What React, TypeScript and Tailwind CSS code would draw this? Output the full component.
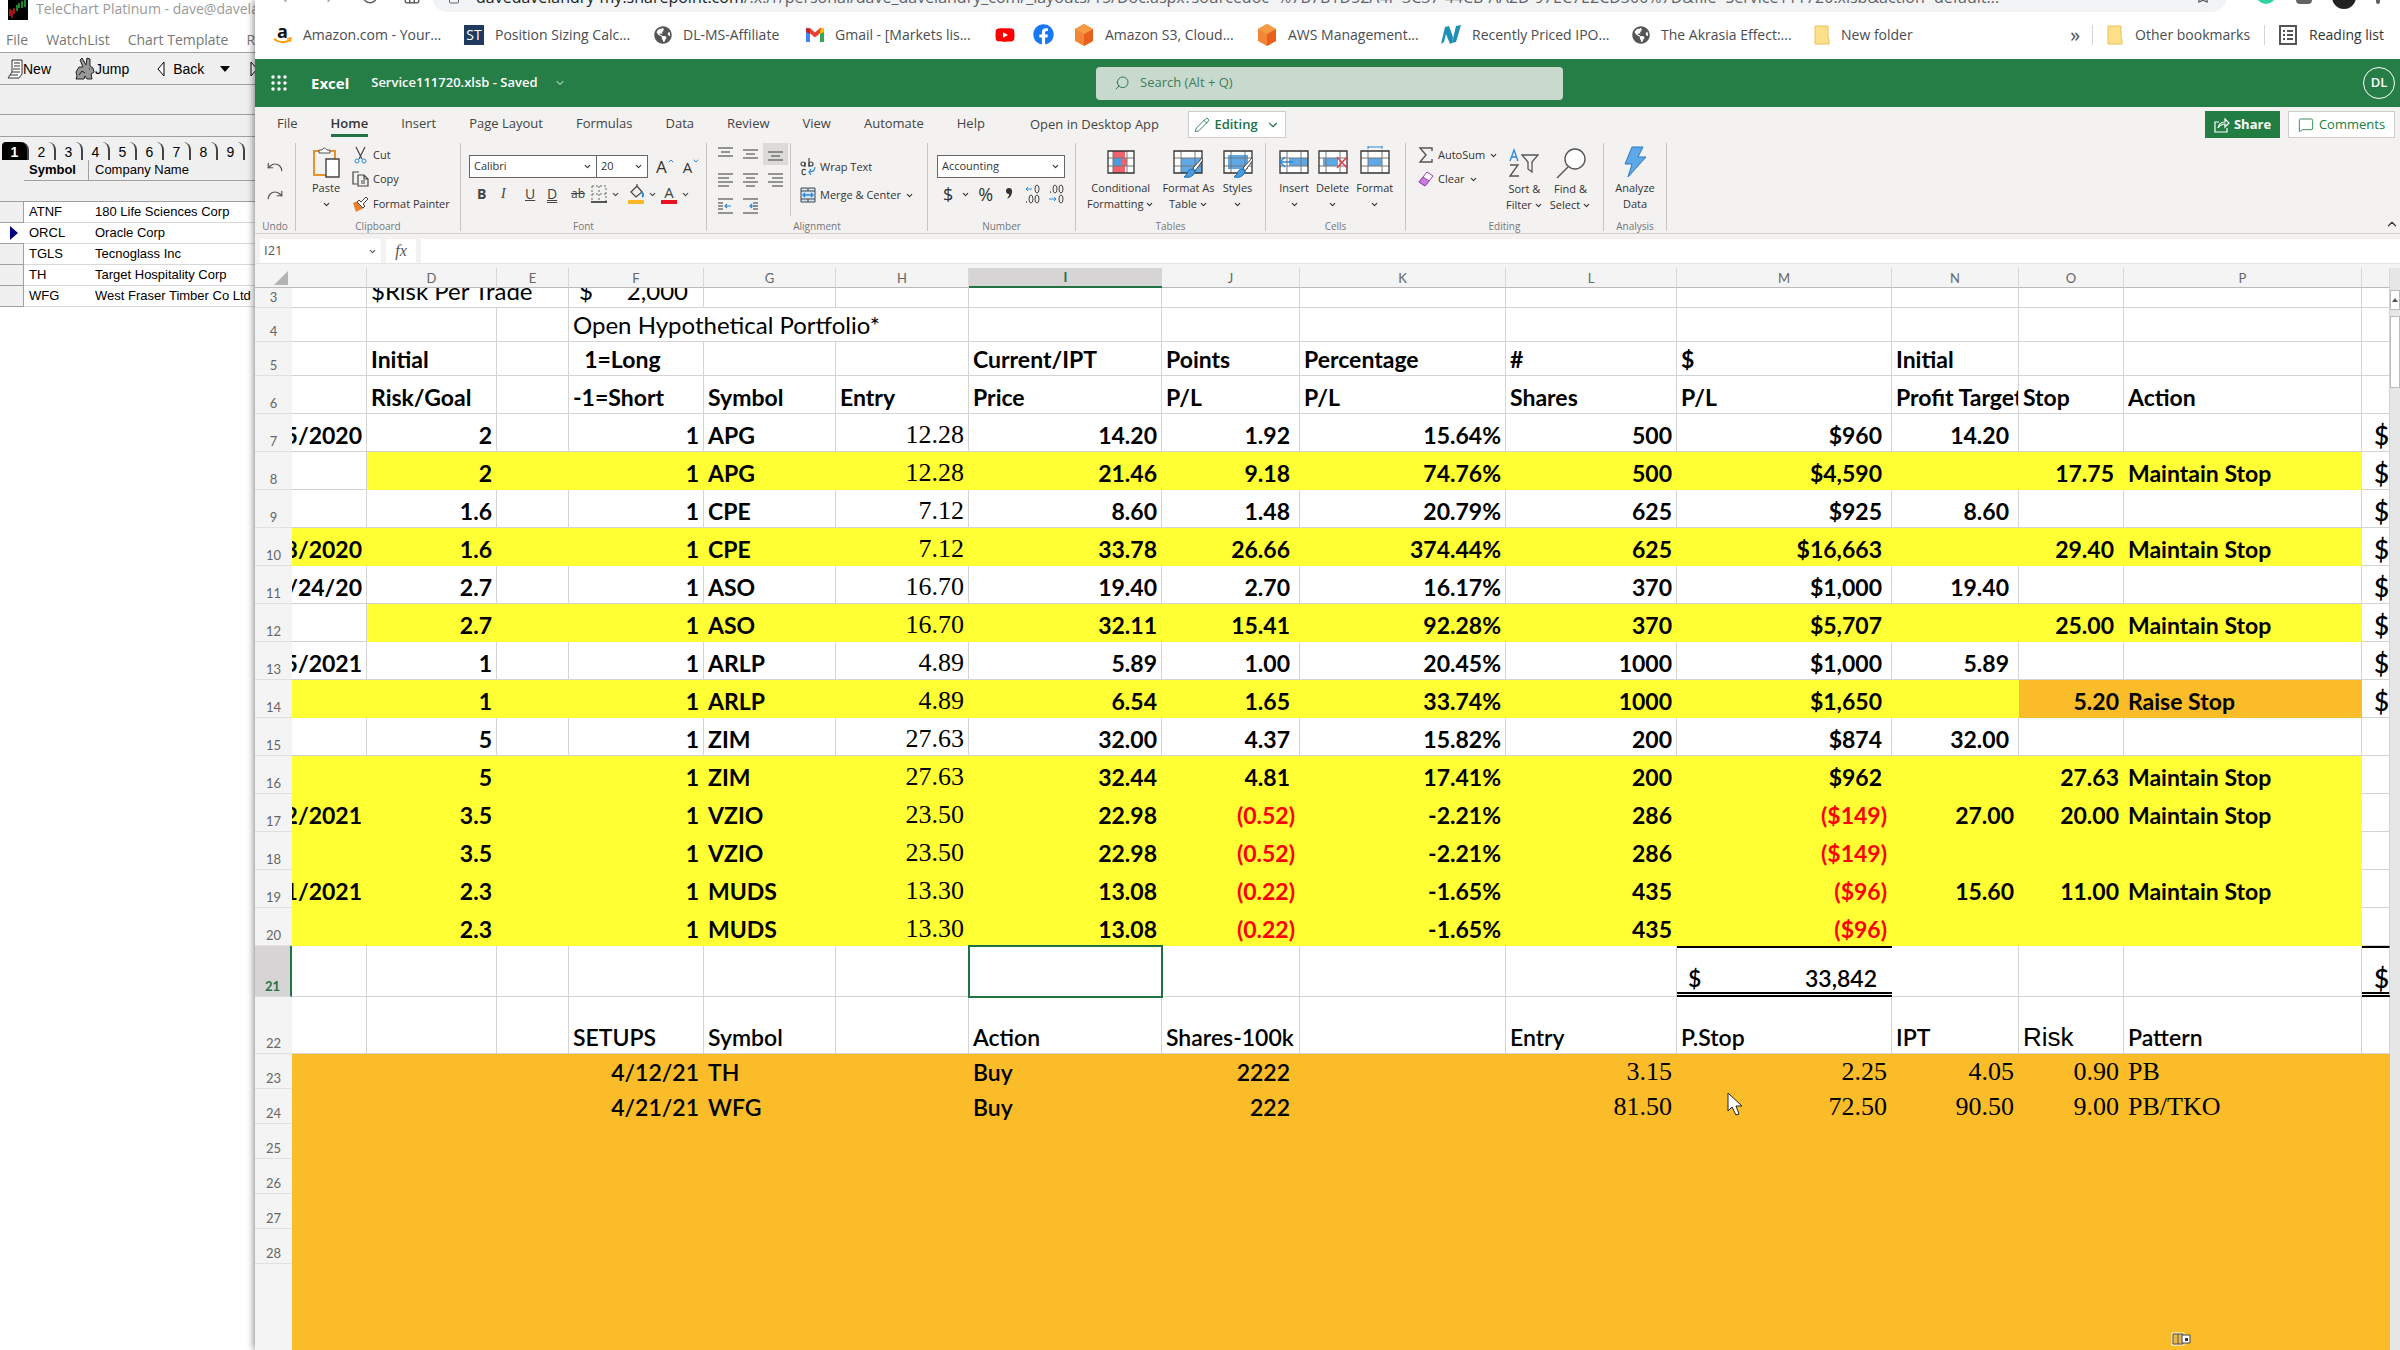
import React from 'react';
import clsx from 'clsx';
import {
  ArrowLeft,
  ArrowRight,
  ChevronDown,
  ChevronUp,
  Home,
  Lock,
  MessageSquare,
  Pencil,
  Redo,
  RotateCw,
  Search,
  Star,
  Undo,
} from 'lucide-react';
import { FaGlobeAmericas, FaYoutube, FaFacebook, FaAmazon } from 'react-icons/fa';

/* ---------- TeleChart window ---------- */

const watchList = [
  { symbol: 'ATNF', name: '180 Life Sciences Corp' },
  { symbol: 'ORCL', name: 'Oracle Corp', current: true },
  { symbol: 'TGLS', name: 'Tecnoglass Inc' },
  { symbol: 'TH', name: 'Target Hospitality Corp' },
  { symbol: 'WFG', name: 'West Fraser Timber Co Ltd' },
];

function TeleChart() {
  return (
    <aside className="w-[255px] shrink-0 overflow-hidden whitespace-nowrap bg-white font-['Liberation_Sans',sans-serif] text-sm text-black">
      <div className="flex h-[22px] items-start pl-2 font-['Open_Sans',sans-serif] text-[#9a9a9a]">
        <svg className="mr-2 h-5 w-5 shrink-0" viewBox="0 0 20 20">
          <rect width="20" height="20" fill="#000" />
          <path d="M2 9v7M4 10v8M6 8v6" stroke="#e02020" strokeWidth="1.4" />
          <path d="M9 5v6M11 3v5M14 1v7M17 0v7" stroke="#20c040" strokeWidth="1.4" />
        </svg>
        <span className="leading-[17px]">TeleChart Platinum - dave@davelandry.com</span>
      </div>
      <nav className="flex h-[30px] items-center gap-[18px] pl-[6px] pt-[6px] font-['Open_Sans',sans-serif] text-sm text-[#777]">
        <button>File</button>
        <button>WatchList</button>
        <button>Chart Template</button>
        <button>Reports</button>
      </nav>
      <div className="flex h-[33px] items-center border-y border-[#a0a0a0] bg-[#f0f0f0] pl-[7px]">
        <button className="flex items-center">
          <svg className="h-5 w-4" viewBox="0 0 16 20" fill="#fff" stroke="#333">
            <path d="M5 1h10v14l-3 4H1l4-6z" />
            <path d="M7 4h6M7 7h6M6 10h7M5 13h8M3 16h8" />
          </svg>
          New
        </button>
        <span className="mx-3 h-6 w-px bg-[#888]" />
        <button className="flex items-center">
          <svg className="h-6 w-5" viewBox="0 0 20 24" fill="#999" stroke="#222">
            <path d="M8 10 5 3l2-2 4 7 1-7 3 1v7l3 2 1 4-3 2 1 5h-5l-2-3-1 3H1l1-3-1-4 3-5z" />
            <path d="m4 18 3-4 3 2M14 12h1" />
          </svg>
          Jump
        </button>
        <span className="mx-3 h-6 w-px bg-[#888]" />
        <button className="flex items-center gap-2">
          <svg className="ml-1 h-4 w-2" viewBox="0 0 8 16" fill="#fff" stroke="#000">
            <path d="M7 1v14L1 8z" />
          </svg>
          Back
          <svg className="ml-2 h-2 w-[10px]" viewBox="0 0 10 8">
            <path d="M0 1h10L5 7z" />
          </svg>
        </button>
        <svg className="ml-5 h-4 w-2 shrink-0" viewBox="0 0 8 16" fill="#fff" stroke="#000">
          <path d="M1 1v14l6-7z" />
        </svg>
      </div>
      <div className="h-[30px] border-b border-[#a0a0a0] bg-[#f0f0f0]" />
      <div className="h-[22px] border-b border-[#a0a0a0] bg-[#f0f0f0]" />
      <div className="flex h-[23px] items-end bg-[#f0f0f0] pl-[2px]">
        {['1', '2', '3', '4', '5', '6', '7', '8', '9'].map((n) => (
          <button
            key={n}
            className={clsx(
              'h-[18px] w-[27px] rounded-tr-lg border-r-2 border-[#444]',
              n === '1' && 'rounded-t bg-black font-bold text-white'
            )}
          >
            {n}
          </button>
        ))}
      </div>
      <table className="w-full table-fixed border-separate border-spacing-0 text-left text-[13px]">
        <colgroup>
          <col className="w-[24px]" />
          <col className="w-[65px]" />
          <col />
        </colgroup>
        <thead>
          <tr className="h-[21px] bg-[#f0f0f0]">
            <th />
            <th className="border-b border-r border-[#a0a0a0] pl-[5px]">Symbol</th>
            <th className="border-b border-[#a0a0a0] pl-[6px] font-normal">Company Name</th>
          </tr>
          <tr className="h-[21px] bg-[#f0f0f0]">
            <th colSpan={3} className="border-b border-[#a0a0a0]" />
          </tr>
        </thead>
        <tbody>
          {watchList.map((row) => (
            <tr key={row.symbol} className="h-[21px] leading-5">
              <td className={clsx('border-b border-[#a0a0a0]', !row.current && 'border-r bg-[#f0f0f0]')}>
                {row.current && (
                  <svg className="ml-[10px] h-[14px] w-2" viewBox="0 0 8 14">
                    <path d="M0 0v14l8-7z" fill="#000080" />
                  </svg>
                )}
              </td>
              <td className="border-b border-[#d8d8d8] pl-[5px]">{row.symbol}</td>
              <td className="border-b border-[#d8d8d8] pl-[6px]">{row.name}</td>
            </tr>
          ))}
        </tbody>
      </table>
    </aside>
  );
}

/* ---------- Browser chrome ---------- */

function AddressBar() {
  return (
    <div className="flex h-3 items-end overflow-hidden text-[#5f6368]">
      <div className="flex w-[177px] shrink-0 items-end gap-6 pl-[22px] [&>svg]:h-[18px] [&>svg]:w-[18px] [&>svg]:shrink-0 [&>svg]:-translate-y-[7px]">
        <ArrowLeft className="text-gray-400" />
        <ArrowRight className="text-gray-400" />
        <RotateCw />
        <Home />
      </div>
      <div className="flex h-8 min-w-0 flex-1 items-end rounded-full bg-[#f1f3f4] px-4">
        <Lock className="h-3 w-3 shrink-0 -translate-y-2" />
        <span className="ml-4 flex-1 overflow-hidden whitespace-nowrap pb-[5px] text-base leading-5">
          <span className="text-[#202124]">davedavelandry-my.sharepoint.com</span>
          /:x:/r/personal/dave_davelandry_com/_layouts/15/Doc.aspx?sourcedoc=%7B7B1D52A4F-3C37-44CB-AA2D-97EC7E2CD300%7D&amp;file=Service111720.xlsb&amp;action=default...
        </span>
        <Star className="h-4 w-4 shrink-0 -translate-y-2" />
      </div>
      <div className="flex w-[173px] shrink-0 items-end justify-end gap-5 pr-5">
        <span className="h-5 w-5 -translate-y-2 rounded-full bg-[#2bd4a0]" />
        <span className="h-4 w-4 -translate-y-2 rounded bg-[#5f6368]" />
        <span className="h-6 w-6 -translate-y-[3px] rounded-full bg-[#222]" />
        <span className="h-4 w-1 -translate-y-2 rounded bg-[#5f6368]" />
      </div>
    </div>
  );
}

function Amazon() {
  return (
    <svg className="h-5 w-[19px]" viewBox="0 0 19 20">
      <text x="4" y="13" fontSize="18" fontWeight="bold" fill="#111">a</text>
      <path d="M1 14q8 6 16 1" fill="none" stroke="#f90" strokeWidth="2" />
      <path d="m14 14 4-1-1 4" fill="none" stroke="#f90" strokeWidth="1.4" />
    </svg>
  );
}

function Cube() {
  return (
    <svg className="h-[22px] w-5" viewBox="0 0 20 22">
      <path d="m10 0 9 5v12l-9 5-9-5V5z" fill="#f58536" />
      <path d="m10 10 9-5v12l-9 5z" fill="#e8601c" />
      <path d="m10 0 9 5-9 5-9-5z" fill="#f79a45" />
    </svg>
  );
}

function Folder() {
  return (
    <svg className="h-5 w-4" viewBox="0 0 16 20">
      <path d="M1 1h13v12l1 1v5H1z" fill="#ffe08a" stroke="#e6c25a" />
    </svg>
  );
}

function Gmail() {
  return (
    <svg className="h-[15px] w-[18px]" viewBox="0 0 18 15" fill="none">
      <path d="M2 3v12" stroke="#4285f4" strokeWidth="4" />
      <path d="M16 3v12" stroke="#34a853" strokeWidth="4" />
      <path d="m2 2 7 6 7-6" stroke="#ea4335" strokeWidth="4" strokeLinejoin="round" />
      <path d="M0 2v3l4 2V3Q1-1 0 2" fill="#c5221f" />
      <path d="M18 2v3l-4 2V3q3-4 4-1" fill="#fbbc04" />
    </svg>
  );
}

function Nasdaq() {
  return (
    <svg className="h-5 w-5" viewBox="0 0 20 20">
      <path d="m4 2 4-1 4 11-1 6-2 1L5 9l-2 8-3 2zM15 1l5-1-5 17-4 1z" fill="#1f8fb5" />
    </svg>
  );
}

const bookmarks = [
  { label: 'Amazon.com - Your...', width: 'w-[191px]', icon: <Amazon /> },
  {
    label: 'Position Sizing Calc...',
    width: 'w-[190px]',
    icon: (
      <span className="flex h-5 w-5 items-center justify-center bg-[#1f3a5f] text-sm leading-5 text-white">ST</span>
    ),
  },
  {
    label: 'DL-MS-Affiliate',
    width: 'w-[152px]',
    icon: <FaGlobeAmericas className="h-[18px] w-[18px] text-[#555]" />,
  },
  { label: 'Gmail - [Markets lis...', width: 'w-[189px]', icon: <Gmail /> },
  { label: '', name: 'YouTube', width: 'w-[38px]', icon: <FaYoutube className="h-5 w-5 text-[#f00]" /> },
  { label: '', name: 'Facebook', width: 'w-[41px]', icon: <FaFacebook className="h-[21px] w-[21px] text-[#1877f2]" /> },
  { label: 'Amazon S3, Cloud...', width: 'w-[183px]', icon: <Cube /> },
  { label: 'AWS Management...', width: 'w-[184px]', icon: <Cube /> },
  { label: 'Recently Priced IPO...', width: 'w-[191px]', icon: <Nasdaq /> },
  {
    label: 'The Akrasia Effect:...',
    width: 'w-[182px]',
    icon: <FaGlobeAmericas className="h-[18px] w-[18px] text-[#555]" />,
  },
  { label: 'New folder', width: 'w-[110px]', icon: <Folder /> },
];

function Bookmarks() {
  return (
    <nav className="flex h-[47px] items-center whitespace-nowrap bg-white pb-[2px] pl-[18px] pr-4 text-sm text-[#4a4d52]">
      {bookmarks.map((b) => (
        <a key={b.label || b.name} href="#" aria-label={b.name} className={clsx('flex shrink-0 items-center gap-[11px]', b.width)}>
          {b.icon}
          {b.label}
        </a>
      ))}
      <button className="ml-auto pr-3 text-xl leading-5">»</button>
      <a href="#" className="flex items-center gap-3 border-l border-gray-300 px-[14px]">
        <Folder />
        Other bookmarks
      </a>
      <a href="#" className="flex items-center gap-3 border-l border-gray-300 pl-[14px] text-[#333]">
        <svg className="h-5 w-[18px]" viewBox="0 0 18 20" fill="none" stroke="#555" strokeWidth="2">
          <path d="M1 1h16v18H1zM4 6h2M8 6h6M4 10h2M8 10h6M4 14h2M8 14h6" />
        </svg>
        Reading list
      </a>
    </nav>
  );
}

/* ---------- Excel header ---------- */

function TitleBar() {
  return (
    <header className="flex h-12 items-center bg-[#257e46] pl-4 pr-[5px] text-white">
      <button aria-label="App launcher">
        <svg className="h-[17px] w-[17px]" viewBox="0 0 17 17" fill="#fff">
          {[2, 8, 14].map((x) => [2, 8, 14].map((y) => <circle key={`${x}-${y}`} cx={x} cy={y} r="1.7" />))}
        </svg>
      </button>
      <span className="ml-[23px] text-[15px] font-bold">Excel</span>
      <button className="ml-[22px] flex items-center text-[13px] font-semibold">
        Service111720.xlsb - Saved
        <ChevronDown className="ml-4 h-3 w-3" />
      </button>
      <label className="ml-auto mr-[800px] flex h-[33px] w-[467px] items-center rounded-sm bg-[#c8d9ce] text-[#2e7a4c]">
        <Search className="ml-[18px] h-4 w-4 -scale-x-100" strokeWidth={1.5} />
        <input
          className="ml-[10px] flex-1 bg-transparent text-[13px] outline-none placeholder:text-[#3d7d58]"
          placeholder="Search (Alt + Q)"
        />
      </label>
      <button className="h-8 w-8 shrink-0 rounded-full border border-white text-[13px] font-semibold">DL</button>
    </header>
  );
}

const tabs = ['File', 'Home', 'Insert', 'Page Layout', 'Formulas', 'Data', 'Review', 'View', 'Automate', 'Help'];

function ShareIcon() {
  return (
    <svg className="h-4 w-4" viewBox="0 0 16 16" fill="none" stroke="currentColor" strokeWidth="1.2">
      <path d="M5 5H1v10h12v-4" />
      <path d="M4 11q1-6 7-6V2l4 4-4 4V7Q7 7 4 11z" />
    </svg>
  );
}

function TabBar() {
  return (
    <div className="flex h-[36px] items-start whitespace-nowrap pl-[22px] pr-[5px] pt-1 text-[13px] text-[#444]">
      <nav className="flex w-[708px] shrink-0 justify-between pt-[2px]">
        {tabs.map((tab) => (
          <button
            key={tab}
            className={clsx(
              'flex h-6 items-start leading-5',
              tab === 'Home' && 'border-b-[3px] border-[#217346] font-semibold text-[#333]'
            )}
          >
            {tab}
          </button>
        ))}
      </nav>
      <button className="ml-[45px] w-[134px] text-left leading-[27px]">Open in Desktop App</button>
      <button className="ml-[24px] flex h-[27px] w-[98px] shrink-0 items-center justify-center gap-1 border border-[#ccc] bg-white font-semibold text-[#217346]">
        <Pencil className="h-4 w-4" strokeWidth={1.3} />
        Editing
        <ChevronDown className="ml-1 h-[14px] w-[14px]" />
      </button>
      <button className="ml-auto flex h-[27px] w-[75px] items-center justify-center gap-1 bg-[#217d42] font-bold text-white">
        <ShareIcon />
        Share
      </button>
      <button className="ml-2 flex h-[27px] w-[107px] items-center justify-center gap-[5px] border border-[#ccc] bg-white text-[#217d42]">
        <MessageSquare className="h-4 w-4" strokeWidth={1.3} />
        Comments
      </button>
    </div>
  );
}

/* ---------- Ribbon ---------- */

function Caret() {
  return <ChevronDown className="h-[9px] w-[9px] shrink-0" strokeWidth={3} />;
}

function Group({ label, width, children }: { label: string; width: string; children: React.ReactNode }) {
  return (
    <section className={clsx('flex h-[88px] shrink-0 flex-col border-r border-[#c8c6c4]', width)}>
      <div className="flex flex-1 items-start">{children}</div>
      <h2 className="text-center text-[10px] leading-[10px] text-[#767676]">{label}</h2>
    </section>
  );
}

function BigButton({ icon, lines, caret = 'below' }: { icon: React.ReactNode; lines: string[]; caret?: string }) {
  return (
    <button className="flex flex-col items-center leading-4">
      <span className="flex h-9 items-center">{icon}</span>
      <span>{lines[0]}</span>
      <span className="flex h-4 items-center gap-[2px]">
        {lines[1]}
        {caret !== 'none' && <Caret />}
      </span>
    </button>
  );
}

function PasteIcon() {
  return (
    <svg className="h-8 w-[28px]" viewBox="0 0 28 32" fill="none">
      <path d="M7 5H2v24h12M18 5h5v8" stroke="#e8912d" strokeWidth="2" />
      <path d="M7 7V4h3q2-4 5 0h3v3z" fill="#fff" stroke="#555" />
      <path d="M14 13h13v18H14z" fill="#fff" stroke="#444" strokeWidth="1.4" />
    </svg>
  );
}

function CutIcon() {
  return (
    <svg className="h-[18px] w-[17px]" viewBox="0 0 17 18" fill="none">
      <path d="m4 1 6 12M13 1 7 13" stroke="#444" strokeWidth="1.2" />
      <circle cx="5" cy="15" r="2" stroke="#2b88d8" />
      <circle cx="12" cy="15" r="2" stroke="#2b88d8" />
    </svg>
  );
}

function CopyIcon() {
  return (
    <svg className="h-4 w-[17px]" viewBox="0 0 17 16" fill="none" stroke="#444" strokeWidth="1.2">
      <path d="M5 13H1V1h6" />
      <path d="M6 4h6l4 4v7H6zM12 4v4h4M9 10h4M9 12h4" />
    </svg>
  );
}

function PainterIcon() {
  return (
    <svg className="h-[17px] w-[17px]" viewBox="0 0 17 17">
      <path d="m1 7 3 9 8-4-6-7z" fill="#e8842d" />
      <path d="m5 6 6 6 2-2-2-2 5-5-2-2-5 5-2-2z" fill="#fff" stroke="#444" />
    </svg>
  );
}

function Lines({ rows, indent }: { rows: number[][]; indent?: boolean }) {
  return (
    <svg className="h-4 w-4" viewBox="0 0 16 16" strokeWidth="1.2">
      {rows.map(([x, y, w]) => (
        <path key={y} d={`M${x} ${y}h${w}`} stroke="#555" />
      ))}
      {indent && <path d="M13 8H7m2-2L7 8l2 2" stroke="#2b88d8" fill="none" />}
    </svg>
  );
}

const alignIcons = [
  { name: 'Top align', rows: [[0, 2, 15], [3, 6, 9], [0, 10, 15]] },
  { name: 'Middle align', rows: [[0, 4, 15], [3, 8, 9], [0, 12, 15]] },
  { name: 'Bottom align', rows: [[0, 6, 15], [3, 10, 9], [0, 14, 15]], active: true },
  { name: 'Align left', rows: [[0, 2, 15], [0, 6, 11], [0, 10, 15], [0, 14, 11]] },
  { name: 'Center', rows: [[0, 2, 15], [3, 6, 9], [0, 10, 15], [3, 14, 9]] },
  { name: 'Align right', rows: [[0, 2, 15], [4, 6, 11], [0, 10, 15], [4, 14, 11]] },
  { name: 'Decrease indent', rows: [[0, 1, 15], [0, 5, 5], [0, 8, 5], [0, 11, 5], [0, 15, 15]], indent: true },
  { name: 'Increase indent', rows: [[0, 1, 15], [10, 5, 5], [10, 8, 5], [10, 11, 5], [0, 15, 15]], indent: true },
];

// Small worksheet drawing shared by the table and cell commands
function Sheet({ children, cells }: { children?: React.ReactNode; cells: string }) {
  return (
    <svg className="h-8 w-[30px]" viewBox="0 0 30 32" fill="none">
      <path d="M1 5h28v22H1z" fill="#fff" />
      <path d={cells} fill="#5fa8e6" />
      <path d="M1 12h28M1 20h28M8 5v22M22 5v22" stroke="#777" />
      <path d="M1 5h28v22H1z" stroke="#333" strokeWidth="1.3" />
      {children}
    </svg>
  );
}

const brush = (
  <>
    <path d="m29 12-9 10 2 3 8-11z" fill="#fff" stroke="#444" />
    <path d="M20 23q-5 0-6 5l-3 3q8 2 11-5z" fill="#4a9be0" stroke="#1f6fb5" />
  </>
);

function Picker({ label, value, width }: { label: string; value: string; width: string }) {
  return (
    <span className={clsx('flex h-[23px] items-center border border-[#666] bg-white pr-1', width)}>
      <select aria-label={label} className="h-full min-w-0 flex-1 appearance-none bg-transparent pl-1 text-[11px] outline-none">
        <option>{value}</option>
      </select>
      <Caret />
    </span>
  );
}

function Ribbon() {
  return (
    <div className="flex items-start border-b border-[#d2d0ce] pb-[2px] text-[11px] text-[#333]">
      <Group label="Undo" width="w-[41px]">
        <div className="flex w-full flex-col items-center gap-[10px] pt-[15px] text-[#555]">
          <button aria-label="Undo"><Undo className="h-[18px] w-[18px]" strokeWidth={1.6} /></button>
          <button aria-label="Redo"><Redo className="h-[18px] w-[18px]" strokeWidth={1.6} /></button>
        </div>
      </Group>
      <Group label="Clipboard" width="w-[165px]">
        <div className="flex pl-4 pt-[1px]">
          <BigButton icon={<PasteIcon />} lines={['Paste']} />
          <div className="ml-3 flex flex-col gap-1 pt-px">
            <button className="flex h-5 items-center gap-1"><CutIcon />Cut</button>
            <button className="flex h-5 items-center gap-1"><CopyIcon />Copy</button>
            <button className="flex h-[22px] items-center gap-1"><PainterIcon />Format Painter</button>
          </div>
        </div>
      </Group>
      <Group label="Font" width="w-[246px]">
        <div className="flex flex-col pl-2 pt-3">
          <div className="flex items-center">
            <Picker label="Font" value="Calibri" width="w-[128px]" />
            <Picker label="Font size" value="20" width="-ml-px w-[52px]" />
            <button className="ml-2 flex text-[17px] leading-5">A<ChevronUp className="h-2 w-2 text-[#2b88d8]" strokeWidth={3} /></button>
            <button className="ml-2 flex text-[15px] leading-5">A<ChevronDown className="h-2 w-2 text-[#2b88d8]" strokeWidth={3} /></button>
          </div>
          <div className="mt-[6px] flex h-5 items-center pl-2 text-sm text-[#444]">
            <button className="w-6 text-left font-bold">B</button>
            <button className="w-6 text-left font-['Liberation_Serif',serif] italic">I</button>
            <button className="w-[22px] text-left underline">U</button>
            <button className="w-6 text-left underline decoration-double">D</button>
            <button className="w-5 text-left text-xs line-through">ab</button>
            <svg className="h-[18px] w-[16px]" viewBox="0 0 16 18" fill="none" stroke="#666">
              <path d="M1 1h14v16M1 1v16M8 1v16M1 9h14" strokeDasharray="2 2" />
              <path d="M0 17h16" stroke="#222" strokeWidth="1.5" />
            </svg>
            <span className="mx-1"><Caret /></span>
            <svg className="ml-1 h-5 w-4" viewBox="0 0 16 20" fill="none">
              <path d="m3 8 6-6 5 6-6 5zM9 2V0" stroke="#444" strokeWidth="1.2" />
              <path d="M14 8q2 4 0 5" stroke="#2b88d8" strokeWidth="2" />
              <path d="M0 16h16v4H0z" fill="#fcb728" />
            </svg>
            <span className="mx-1"><Caret /></span>
            <button className="w-4 border-b-4 border-[#e81123] text-[15px] leading-4">A</button>
            <span className="mx-1"><Caret /></span>
          </div>
        </div>
      </Group>
      <Group label="Alignment" width="w-[221px]">
        <div className="flex">
          <div className="grid h-[73px] w-[84px] grid-cols-[25px_25px_25px] content-start gap-y-1 border-r border-[#c8c6c4] pl-[6px]">
            {alignIcons.map((icon) => (
              <button
                key={icon.name}
                aria-label={icon.name}
                className={clsx('flex h-[22px] items-center justify-center', icon.active && 'bg-[#dddbda]')}
              >
                <Lines rows={icon.rows} indent={icon.indent} />
              </button>
            ))}
          </div>
          <div className="flex flex-col gap-2 pl-[9px] pt-[14px]">
            <button className="flex h-5 items-center gap-1">
              <svg className="h-[18px] w-4" viewBox="0 0 16 18" fill="none" stroke="#444" strokeWidth="1.2">
                <circle cx="3" cy="6" r="2" />
                <path d="M5 4v5M9 0v9" />
                <circle cx="11" cy="6" r="2" />
                <path d="M6 12q-4-2-4 2t4 2" />
                <path d="M15 9q0 5-6 5m2-3-2 3 2 3" stroke="#2b88d8" />
              </svg>
              Wrap Text
            </button>
            <button className="flex h-5 items-center gap-1">
              <svg className="h-4 w-4" viewBox="0 0 16 16" fill="none">
                <path d="M1 1h14v14H1z" fill="#cfe4f7" stroke="#444" />
                <path d="M1 4h14M1 12h14M8 1v3M8 12v3" stroke="#444" />
                <path d="M3 8h10M5 6 3 8l2 2M11 6l2 2-2 2" stroke="#2b88d8" strokeWidth="1.3" />
              </svg>
              Merge &amp; Center
              <Caret />
            </button>
          </div>
        </div>
      </Group>
      <Group label="Number" width="w-[148px]">
        <div className="flex flex-col pl-[9px] pt-3">
          <Picker label="Number format" value="Accounting" width="w-[128px]" />
          <div className="mt-[6px] flex h-5 items-center gap-2 pl-[6px]">
            <button className="text-lg">$</button>
            <Caret />
            <button className="text-lg">%</button>
            <svg className="mx-1 h-4 w-2" viewBox="0 0 8 16">
              <circle cx="4" cy="5" r="3" fill="#333" />
              <path d="M7 5q0 6-5 8 3-4 2-7z" fill="#333" />
            </svg>
            <svg className="h-5 w-4" viewBox="0 0 16 20" fill="none" stroke="#444">
              <path d="M7 5H1m2-2L1 5l2 2" stroke="#2b88d8" />
              <ellipse cx="12" cy="5" rx="2" ry="4" />
              <ellipse cx="6" cy="15" rx="2" ry="4" />
              <ellipse cx="12" cy="15" rx="2" ry="4" />
              <path d="M1 18h1" strokeWidth="1.5" />
            </svg>
            <svg className="h-5 w-4" viewBox="0 0 16 20" fill="none" stroke="#444">
              <path d="M1 8h1" strokeWidth="1.5" />
              <ellipse cx="6" cy="5" rx="2" ry="4" />
              <ellipse cx="12" cy="5" rx="2" ry="4" />
              <path d="M0 15h7m-2-2 2 2-2 2" stroke="#2b88d8" />
              <ellipse cx="12" cy="15" rx="2" ry="4" />
            </svg>
          </div>
        </div>
      </Group>
      <Group label="Tables" width="w-[190px]">
        <div className="flex gap-2 pl-[11px] pt-[1px]">
          <BigButton
            icon={
              <svg className="h-8 w-7" viewBox="0 0 28 32" fill="none">
                <path d="M1 5h26v22H1z" fill="#fff" />
                <path d="M6 5h12v7H6zM6 20h12v7H6z" fill="#f0616d" />
                <path d="M6 12h8v8H6z" fill="#4a9be0" />
                <path d="M14 12h6v8h-6z" fill="#f0616d" />
                <path d="M1 12h26M1 20h26M6 5v22M20 5v22" stroke="#777" />
                <path d="M1 5h26v22H1z" stroke="#333" strokeWidth="1.3" />
              </svg>
            }
            lines={['Conditional', 'Formatting']}
          />
          <BigButton icon={<Sheet cells="M8 12h21v15H8z">{brush}</Sheet>} lines={['Format As', 'Table']} />
          <BigButton icon={<Sheet cells="M5 9h20v14H5z">{brush}</Sheet>} lines={['Styles']} />
        </div>
      </Group>
      <Group label="Cells" width="w-[140px]">
        <div className="flex gap-[7px] pl-[13px] pt-[1px]">
          <BigButton
            icon={
              <Sheet cells="M10 12h19v8H10z">
                <path d="M14 16H1m5-5-5 5 5 5" stroke="#2b88d8" strokeWidth="1.5" />
              </Sheet>
            }
            lines={['Insert']}
          />
          <BigButton
            icon={
              <Sheet cells="M5 12h15v8H5z">
                <path d="m19 11 10 11M29 11 19 22" stroke="#e04050" strokeWidth="1.6" />
              </Sheet>
            }
            lines={['Delete']}
          />
          <BigButton
            icon={
              <Sheet cells="M8 12h14v8H8z">
                <path d="M8 1h14M8 0v3M22 0v3" stroke="#2b88d8" />
              </Sheet>
            }
            lines={['Format']}
          />
        </div>
      </Group>
      <Group label="Editing" width="w-[198px]">
        <div className="flex pl-3 pt-[2px]">
          <div className="flex w-[88px] flex-col gap-1">
            <button className="flex h-5 items-center gap-1">
              <svg className="h-4 w-4" viewBox="0 0 16 16" fill="none" stroke="#555" strokeWidth="1.4">
                <path d="M14 4V1H2l6 7-6 7h12v-3" />
              </svg>
              AutoSum
              <Caret />
            </button>
            <button className="flex h-5 items-center gap-1">
              <svg className="h-4 w-4" viewBox="0 0 16 16" stroke="#9b3fb5" fill="#fff">
                <path d="m9 1 6 4-8 10-6-4z" />
                <path d="m5 6 6 4-4 5-6-4z" fill="#c77ddb" />
              </svg>
              Clear
              <Caret />
            </button>
          </div>
          <BigButton
            icon={
              <svg className="h-8 w-[30px]" viewBox="0 0 30 32" fill="none">
                <path d="m1 14 4-11 4 11M2 10h6" stroke="#2b88d8" strokeWidth="1.3" />
                <path d="M1 18h8L1 29h9" stroke="#555" strokeWidth="1.4" />
                <path d="M13 8h16l-6 7v10l-4-3v-7z" stroke="#555" strokeWidth="1.3" />
              </svg>
            }
            lines={['Sort &', 'Filter']}
          />
          <span className="w-[7px]" />
          <BigButton
            icon={
              <svg className="h-8 w-[30px]" viewBox="0 0 30 32" fill="none" stroke="#555" strokeWidth="1.4">
                <circle cx="19" cy="12" r="10" fill="#fff" />
                <path d="M12 20 1 31" />
              </svg>
            }
            lines={['Find &', 'Select']}
          />
        </div>
      </Group>
      <Group label="Analysis" width="w-[63px]">
        <div className="flex w-full justify-center pt-[1px]">
          <BigButton
            icon={
              <svg className="h-8 w-6" viewBox="0 0 24 32">
                <path d="M9 1h11l-5 10h8L5 31l4-13H2z" fill="#5fa8e6" stroke="#2b78c5" />
              </svg>
            }
            lines={['Analyze', 'Data']}
            caret="none"
          />
        </div>
      </Group>
      <button aria-label="Collapse ribbon" className="ml-auto self-end pr-px">
        <ChevronUp className="h-[14px] w-[14px]" />
      </button>
    </div>
  );
}

function FormulaBar() {
  return (
    <div className="flex h-[29px] shrink-0 items-end gap-[5px] pl-[5px] text-[13px] text-[#555]">
      <label className="flex h-6 w-[121px] items-center bg-white pr-1">
        <input aria-label="Name box" className="min-w-0 flex-1 pl-1 outline-none" defaultValue="I21" />
        <Caret />
      </label>
      <span className="flex h-6 w-[30px] items-center justify-center bg-white font-['Liberation_Serif',serif] text-base italic">
        fx
      </span>
      <input aria-label="Formula" className="h-6 min-w-0 flex-1 bg-white outline-none" />
    </div>
  );
}

/* ---------- Worksheet ---------- */

type Row = {
  n: number;
  fill?: 'yellow' | 'orange';
  cells: Record<string, string>;
};

const columns = ['C', 'D', 'E', 'F', 'G', 'H', 'I', 'J', 'K', 'L', 'M', 'N', 'O', 'P', 'Q'];

const trade = (
  n: number,
  fill: 'yellow' | undefined,
  values: string[],
  extra: Record<string, string> = {}
): Row => {
  const [D, G, H, I, J, K, L, M] = values;
  return { n, fill, cells: { D, F: '1', G, H, I, J, K, L, M, ...extra } };
};

const keep = 'Maintain Stop';

const rows: Row[] = [
  {
    n: 5,
    cells: { D: 'Initial', F: '  1=Long', I: 'Current/IPT', J: 'Points', K: 'Percentage', L: '#', M: '$', N: 'Initial' },
  },
  {
    n: 6,
    cells: {
      D: 'Risk/Goal', F: '-1=Short', G: 'Symbol', H: 'Entry', I: 'Price', J: 'P/L', K: 'P/L',
      L: 'Shares', M: 'P/L', N: 'Profit Target', O: 'Stop', P: 'Action',
    },
  },
  trade(7, undefined, ['2', 'APG', '12.28', '14.20', '1.92', '15.64%', '500', '$960'], { C: '5/2020', N: '14.20', Q: '$' }),
  trade(8, 'yellow', ['2', 'APG', '12.28', '21.46', '9.18', '74.76%', '500', '$4,590'], { O: '17.75', P: keep, Q: '$' }),
  trade(9, undefined, ['1.6', 'CPE', '7.12', '8.60', '1.48', '20.79%', '625', '$925'], { N: '8.60', Q: '$' }),
  trade(10, 'yellow', ['1.6', 'CPE', '7.12', '33.78', '26.66', '374.44%', '625', '$16,663'], {
    C: '8/2020', O: '29.40', P: keep, Q: '$',
  }),
  trade(11, undefined, ['2.7', 'ASO', '16.70', '19.40', '2.70', '16.17%', '370', '$1,000'], { C: '/24/20', N: '19.40', Q: '$' }),
  trade(12, 'yellow', ['2.7', 'ASO', '16.70', '32.11', '15.41', '92.28%', '370', '$5,707'], { O: '25.00', P: keep, Q: '$' }),
  trade(13, undefined, ['1', 'ARLP', '4.89', '5.89', '1.00', '20.45%', '1000', '$1,000'], { C: '5/2021', N: '5.89', Q: '$' }),
  trade(14, 'yellow', ['1', 'ARLP', '4.89', '6.54', '1.65', '33.74%', '1000', '$1,650'], { O: '5.20', P: 'Raise Stop', Q: '$' }),
  trade(15, undefined, ['5', 'ZIM', '27.63', '32.00', '4.37', '15.82%', '200', '$874'], { N: '32.00' }),
  trade(16, 'yellow', ['5', 'ZIM', '27.63', '32.44', '4.81', '17.41%', '200', '$962'], { O: '27.63', P: keep }),
  trade(17, 'yellow', ['3.5', 'VZIO', '23.50', '22.98', '(0.52)', '-2.21%', '286', '($149)'], {
    C: '2/2021', N: '27.00', O: '20.00', P: keep,
  }),
  trade(18, 'yellow', ['3.5', 'VZIO', '23.50', '22.98', '(0.52)', '-2.21%', '286', '($149)']),
  trade(19, 'yellow', ['2.3', 'MUDS', '13.30', '13.08', '(0.22)', '-1.65%', '435', '($96)'], {
    C: '1/2021', N: '15.60', O: '11.00', P: keep,
  }),
  trade(20, 'yellow', ['2.3', 'MUDS', '13.30', '13.08', '(0.22)', '-1.65%', '435', '($96)']),
  { n: 21, cells: { M: '33,842', Q: '$' } },
  {
    n: 22,
    cells: {
      F: 'SETUPS', G: 'Symbol', I: 'Action', J: 'Shares-100k', L: 'Entry', M: 'P.Stop', N: 'IPT', O: 'Risk', P: 'Pattern',
    },
  },
  {
    n: 23,
    fill: 'orange',
    cells: { F: '4/12/21', G: 'TH', I: 'Buy', J: '2222', L: '3.15', M: '2.25', N: '4.05', O: '0.90', P: 'PB' },
  },
  {
    n: 24,
    fill: 'orange',
    cells: { F: '4/21/21', G: 'WFG', I: 'Buy', J: '222', L: '81.50', M: '72.50', N: '90.50', O: '9.00', P: 'PB/TKO' },
  },
  { n: 25, fill: 'orange', cells: {} },
  { n: 26, fill: 'orange', cells: {} },
  { n: 27, fill: 'orange', cells: {} },
  { n: 28, fill: 'orange', cells: {} },
];

function rowHeight(n: number) {
  if (n === 5) return 'h-[34px]';
  if (n === 21) return 'h-[51px]';
  if (n === 22) return 'h-[57px]';
  return n > 22 ? 'h-[35px]' : 'h-[38px]';
}

function cellFill(row: Row, col: string) {
  if (row.fill === 'orange') return 'bg-[#fabc28] border-transparent';
  if (row.n === 14 && (col === 'O' || col === 'P')) return 'bg-[#fabc28] border-transparent';
  if (!row.fill || col === 'Q') return 'border-[#d4d4d4]';
  if (col === 'C' && (row.n === 8 || row.n === 12)) return 'border-[#d4d4d4]';
  return 'bg-[#ffff33] border-transparent';
}

function cellFont(row: Row, col: string) {
  if (col === 'H' && row.n > 6 && row.n < 21) return "font-['Liberation_Serif',serif] text-[26px]";
  if (row.n > 22 && ['L', 'M', 'N', 'O', 'P'].includes(col)) return "font-['Liberation_Serif',serif] text-[26px]";
  if (row.n === 22 && col === 'O') return "font-['Liberation_Sans',sans-serif] text-[26px]";
  if (col === 'Q') return 'text-[26px] font-semibold';
  return row.n < 21 ? 'text-[23px] font-bold' : 'text-[23px] font-semibold';
}

function cellText(row: Row, col: string) {
  const value = row.cells[col] ?? '';
  const labels = row.n < 7 || row.n === 22;
  const left = labels || col === 'G' || col === 'P' || (row.n > 22 && col === 'I');
  const accounting =
    row.n < 21 &&
    !value.startsWith('(') &&
    (col === 'J' || col === 'M' || (col === 'N' && row.n < 17) || (col === 'O' && row.n < 13));
  return clsx(
    cellFont(row, col),
    left ? 'pl-1 text-left' : 'text-right',
    !left && (accounting || (row.n > 22 && col === 'J') ? 'pr-[9px]' : col === 'Q' ? 'pr-0' : 'pr-1'),
    value.startsWith('(') && 'text-[#f00]'
  );
}

function RowNumber({ n }: { n: number }) {
  return (
    <th
      scope="row"
      className={clsx(
        'border-b border-[#e0e0e0] align-bottom text-[13px] leading-[19px]',
        n === 21 ? 'border-r-2 border-r-[#217346] bg-[#d6d4d4] font-bold text-[#217346]' : 'bg-[#f4f4f4] font-normal text-[#666]'
      )}
    >
      {n}
    </th>
  );
}

function Total() {
  return (
    <td className="border-b-[5px] border-double border-t-2 border-b-black border-t-black pl-[11px] pr-[15px] align-bottom text-[23px] font-semibold leading-7 [border-top-style:solid]">
      <div className="flex justify-between">
        <span>$</span>
        <span>33,842</span>
      </div>
    </td>
  );
}

const blank = 'border-b border-r border-[#d4d4d4]';

function Worksheet() {
  return (
    <div className="flex min-h-0 flex-1">
      <div className="flex min-w-0 flex-1 flex-col bg-white font-['Lato',sans-serif] text-black">
        <table className="w-full table-fixed border-separate border-spacing-0 whitespace-pre">
          <colgroup>
            <col className="w-[37px]" />
            <col className="w-[75px]" />
            <col className="w-[130px]" />
            <col className="w-[72px]" />
            <col className="w-[135px]" />
            <col className="w-[132px]" />
            <col className="w-[133px]" />
            <col className="w-[193px]" />
            <col className="w-[138px]" />
            <col className="w-[206px]" />
            <col className="w-[171px]" />
            <col className="w-[215px]" />
            <col className="w-[127px]" />
            <col className="w-[105px]" />
            <col className="w-[238px]" />
            <col />
          </colgroup>
          <thead>
            <tr className="h-5 bg-[#f4f4f4] text-[13px] font-normal text-[#666]">
              <td className="border-b border-[#bbb]">
                <svg className="ml-auto mr-1 h-[14px] w-[14px]" viewBox="0 0 14 14">
                  <path d="M14 0v14H0z" fill="#b4b4b4" />
                </svg>
              </td>
              {columns.map((c) => (
                <th
                  key={c}
                  scope="col"
                  className={clsx(
                    'leading-[18px]',
                    c === 'I'
                      ? 'border-b-2 border-[#217346] bg-[#d6d4d4] font-bold text-[#217346]'
                      : 'border-b border-r border-b-[#bbb] border-r-[#d8d8d8] font-normal'
                  )}
                >
                  {c === 'C' || c === 'Q' ? '' : c}
                </th>
              ))}
            </tr>
          </thead>
          <tbody>
            <tr className="h-5 text-2xl leading-7">
              <RowNumber n={3} />
              <td className={blank} />
              <td colSpan={2} className={blank}>
                <div className="flex h-[19px] items-end overflow-hidden pb-[2px] pl-1 leading-7">$Risk Per Trade</div>
              </td>
              <td className={blank}>
                <div className="flex h-[19px] items-end justify-between overflow-hidden pb-[2px] pl-[10px] pr-[15px] leading-7">
                  <span>$</span>
                  <span>2,000</span>
                </div>
              </td>
              {columns.slice(4).map((c) => (
                <td key={c} className={blank} />
              ))}
            </tr>
            <tr className="h-[34px] text-2xl">
              <RowNumber n={4} />
              <td className={blank} />
              <td className={blank} />
              <td className={blank} />
              <td colSpan={3} className={clsx(blank, 'pb-[2px] pl-1 align-bottom leading-7')}>
                Open Hypothetical Portfolio*
              </td>
              {columns.slice(6).map((c) => (
                <td key={c} className={blank} />
              ))}
            </tr>
            {rows.map((row) => (
              <tr key={row.n} className={rowHeight(row.n)}>
                <RowNumber n={row.n} />
                {columns.map((c) => {
                  if (row.n === 21 && c === 'M') return <Total key={c} />;
                  return (
                    <td
                      key={c}
                      className={clsx(
                        'overflow-hidden border-b border-r align-bottom leading-7',
                        cellFill(row, c),
                        cellText(row, c),
                        row.n === 21 && c === 'Q' ? 'pb-0' : 'pb-[2px]',
                        row.n === 21 && c === 'I' && 'outline-2 -outline-offset-1 outline-[#217346]',
                        row.n === 21 &&
                          c === 'Q' &&
                          'border-b-[5px] border-double border-t-2 border-b-black border-t-black [border-top-style:solid]'
                      )}
                    >
                      {c === 'C' && row.cells.C ? (
                        <div className="flex justify-end overflow-hidden">{row.cells.C}</div>
                      ) : (
                        row.cells[c]
                      )}
                    </td>
                  );
                })}
              </tr>
            ))}
          </tbody>
        </table>
        <div className="flex flex-1">
          <div className="w-[37px] bg-[#f4f4f4]" />
          <div className="flex-1 bg-[#fabc28]" />
        </div>
      </div>
      <div className="w-[10px] shrink-0 bg-[#e6e6e6] pt-[22px]">
        <button aria-label="Scroll up" className="flex h-5 w-full items-center justify-center border border-[#bbb] bg-white">
          <svg className="h-1 w-[6px]" viewBox="0 0 6 4">
            <path d="M3 0l3 4H0z" fill="#555" />
          </svg>
        </button>
        <div className="mt-[6px] h-[72px] border border-[#bbb] bg-white" />
      </div>
    </div>
  );
}

export default function App() {
  return (
    <div className="relative flex h-screen overflow-hidden bg-white">
      <TeleChart />
      <main className="relative flex min-w-0 flex-1 flex-col bg-[#f3f2f1] font-['Open_Sans',sans-serif] shadow-[0_0_8px_rgba(0,0,0,0.6)]">
        <div className="bg-white">
          <AddressBar />
          <Bookmarks />
        </div>
        <TitleBar />
        <TabBar />
        <Ribbon />
        <FormulaBar />
        <div className="h-[5px] shrink-0 border-t border-[#e4e4e4] bg-[#f4f4f4]" />
        <Worksheet />
      </main>
      {/* mouse pointer */}
      <svg className="absolute left-[1727px] top-[1092px] h-6 w-4" viewBox="0 0 16 24">
        <path d="M1 1v18l4-4 4 8 3-1-3-8h6z" fill="#fff" stroke="#222" />
      </svg>
      <svg className="absolute left-[2171px] top-[1332px] h-[14px] w-5" viewBox="0 0 20 14">
        <path d="M1 1h12v12H1z" fill="#e8b84a" stroke="#fff" />
        <path d="M2 2h10v10H2zM7 2v10" fill="none" stroke="#555" />
        <path d="M11 3h8v8h-8z" fill="#fff" stroke="#445" />
        <path d="M14 6h3v3h-3z" fill="#335" />
      </svg>
    </div>
  );
}
